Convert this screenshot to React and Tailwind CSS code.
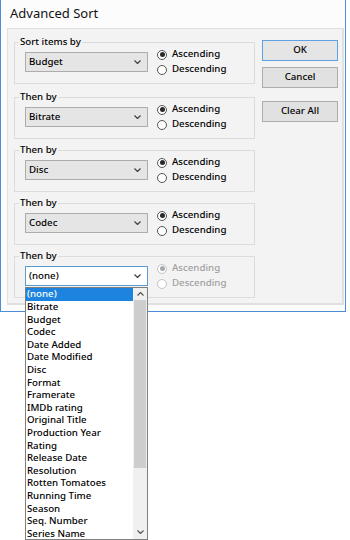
import React from 'react';

const sortFields = [
  '(none)', 'Bitrate', 'Budget', 'Codec', 'Date Added', 'Date Modified', 'Disc', 'Format',
  'Framerate', 'IMDb rating', 'Original Title', 'Production Year', 'Rating', 'Release Date',
  'Resolution', 'Rotten Tomatoes', 'Running Time', 'Season', 'Seq. Number', 'Series Name',
];

const groups = [
  { label: 'Sort items by', value: 'Budget' },
  { label: 'Then by', value: 'Bitrate' },
  { label: 'Then by', value: 'Disc' },
  { label: 'Then by', value: 'Codec' },
  { label: 'Then by', value: '(none)', open: true },
];

const Chevron = ({ up = false, color = '#404040' }) => (
  <svg width="7" height="4" viewBox="0 0 7 4" className="shrink-0">
    <polyline
      points={up ? '0.5,3.5 3.5,0.5 6.5,3.5' : '0.5,0.5 3.5,3.5 6.5,0.5'}
      fill="none"
      stroke={color}
      strokeWidth="1.2"
    />
  </svg>
);

const Radio = ({ checked, disabled, label }) => (
  <div className={`h-[15px] flex items-center gap-[5px] ${disabled ? 'text-[#a0a0a0]' : 'text-black'}`}>
    <span
      className={`w-[10px] h-[10px] rounded-full border bg-white flex items-center justify-center ${
        disabled ? 'border-[#c4c4c4]' : 'border-[#555]'
      }`}
    >
      {checked && (
        <span className={`w-[5px] h-[5px] rounded-full ${disabled ? 'bg-[#a8a8a8]' : 'bg-[#2a2a2a]'}`} />
      )}
    </span>
    <span>{label}</span>
  </div>
);

const SortGroup = ({ label, value, open }) => (
  <fieldset className="w-[241px] h-[48px] border border-[#dcdcdc] px-[10px]">
    <legend className="-ml-[6px] px-px leading-[12px]">{label}</legend>
    <div className="flex items-start">
      <div
        className={`mt-[4px] w-[123px] h-[20px] border flex items-center justify-between pl-[3px] pr-[6px] ${
          open ? 'bg-white border-[#5b9bd5]' : 'bg-[#e5e5e5] border-[#acacac]'
        }`}
      >
        <span>{value}</span>
        <Chevron />
      </div>
      <div className="ml-[9px] -mt-px flex flex-col">
        <Radio checked disabled={open} label="Ascending" />
        <Radio disabled={open} label="Descending" />
      </div>
    </div>
  </fieldset>
);

const Button = ({ children, isDefault, className = '' }) => (
  <div
    className={`w-[76px] h-[21px] flex items-center justify-center border ${
      isDefault ? 'border-[#5fa2e2] bg-[#e5e5e5]' : 'border-[#adadad] bg-[#e1e1e1]'
    } ${className}`}
  >
    {children}
  </div>
);

const App = () => {
  return (
    <div className="w-[350px] h-[540px] bg-white relative overflow-hidden font-['Noto_Sans',sans-serif] font-medium text-[9.7px] text-black">
      <div className="w-[346px] h-[312px] bg-[#fcfcfc] border-x border-b border-[#4a8fd8] flex flex-col">
        <div className="h-[28px] pl-[9px] flex items-center text-[13px] font-normal text-[#111]">Advanced Sort</div>

        <div className="ml-[6px] w-[337px] h-[277px] bg-[#f3f3f3] border-l border-t border-r-2 border-b-2 border-[#e0e0e0] flex items-start">
          <div className="pl-[6px] pt-[7px] flex flex-col gap-[5px]">
            {groups.map((g, i) => (
              <div key={i} className={i === 1 ? 'mt-[2px]' : ''}>
                <SortGroup {...g} />
              </div>
            ))}
          </div>

          <div className="ml-[7px] pt-[11px] flex flex-col">
            <Button isDefault>OK</Button>
            <Button className="mt-[6px]">Cancel</Button>
            <Button className="mt-[13px]">Clear All</Button>
          </div>
        </div>
      </div>

      {/* open combo list */}
      <div className="absolute left-[25px] top-[287px] w-[123px] h-[253px] bg-white border border-[#7f7f7f] flex">
        <div className="flex-1 flex flex-col">
          {sortFields.map((f, i) => (
            <div
              key={f}
              className={`h-[12.6px] shrink-0 pl-px flex items-center leading-none ${
                i === 0 ? 'bg-[#1c84de] text-white' : 'text-black'
              }`}
            >
              {f}
            </div>
          ))}
        </div>
        <div className="w-[14px] bg-[#f0f0f0] flex flex-col">
          <div className="h-[12px] flex items-center justify-center">
            <Chevron up color="#555" />
          </div>
          <div className="mx-[1px] h-[168px] bg-[#cdcdcd]" />
          <div className="flex-1" />
          <div className="h-[14px] flex items-center justify-center">
            <Chevron color="#555" />
          </div>
        </div>
      </div>
    </div>
  );
};

export default App;
